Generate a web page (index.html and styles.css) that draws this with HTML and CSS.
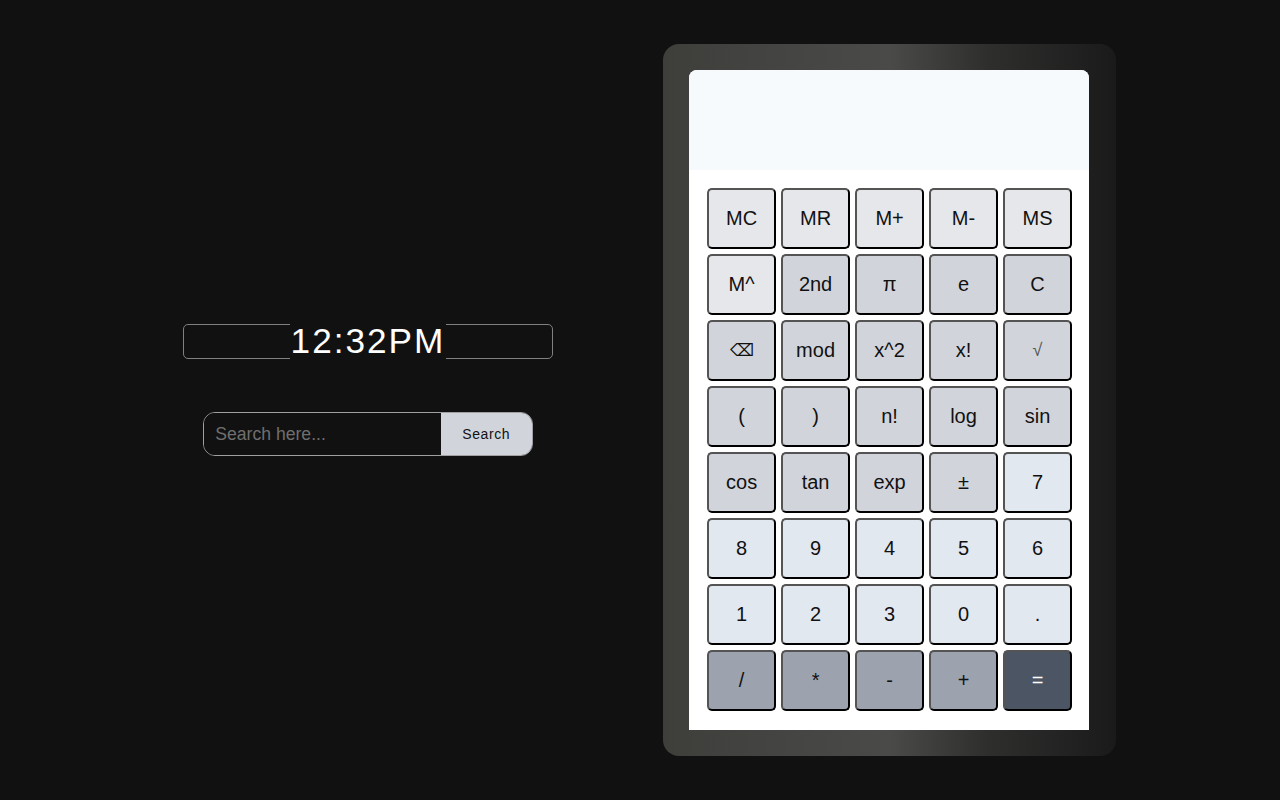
FILE: index.html
```html
<!DOCTYPE html>
<html lang="en">
<head>
<meta charset="utf-8">
<title>Calculator</title>
<link rel="stylesheet" href="styles.css">
</head>
<body>
<main class="page">
  <section class="left">
    <div class="clock"><span class="time">12:32PM</span></div>
    <form class="search">
      <input class="search-input" type="text" placeholder="Search here...">
      <button class="search-btn" type="button">Search</button>
    </form>
  </section>
  <section class="calc">
    <div class="screen">
      <div class="display"></div>
      <div class="keys">
        <button class="key mem">MC</button>
        <button class="key mem">MR</button>
        <button class="key mem">M+</button>
        <button class="key mem">M-</button>
        <button class="key mem">MS</button>
        <button class="key mem">M^</button>
        <button class="key fn">2nd</button>
        <button class="key fn">π</button>
        <button class="key fn">e</button>
        <button class="key fn">C</button>
        <button class="key fn back">⌫</button>
        <button class="key fn">mod</button>
        <button class="key fn">x^2</button>
        <button class="key fn">x!</button>
        <button class="key fn root">√</button>
        <button class="key fn">(</button>
        <button class="key fn">)</button>
        <button class="key fn">n!</button>
        <button class="key fn">log</button>
        <button class="key fn">sin</button>
        <button class="key fn">cos</button>
        <button class="key fn">tan</button>
        <button class="key fn">exp</button>
        <button class="key fn">±</button>
        <button class="key num">7</button>
        <button class="key num">8</button>
        <button class="key num">9</button>
        <button class="key num">4</button>
        <button class="key num">5</button>
        <button class="key num">6</button>
        <button class="key num">1</button>
        <button class="key num">2</button>
        <button class="key num">3</button>
        <button class="key num">0</button>
        <button class="key num">.</button>
        <button class="key op">/</button>
        <button class="key op">*</button>
        <button class="key op">-</button>
        <button class="key op">+</button>
        <button class="key eq">=</button>
      </div>
    </div>
  </section>
</main>
</body>
</html>
```
FILE: styles.css
```css
* { box-sizing: border-box; }
html, body { margin: 0; height: 100%; }
body {
  background: #111111;
  font-family: "Liberation Sans", Arial, sans-serif;
  overflow: hidden;
}
.page {
  display: flex;
  align-items: center;
  gap: 110.3px;
  height: 800px;
  padding-left: 183.3px;
}
.left {
  width: 369.4px;
  margin-bottom: 20px;
  display: flex;
  flex-direction: column;
  align-items: center;
  gap: 53px;
}
.clock {
  width: 100%;
  height: 35px;
  border: 1px solid #808080;
  border-radius: 5px;
  display: flex;
  justify-content: center;
}
.time {
  margin: -1px 0;
  padding: 0 0.6px;
  height: 35px;
  line-height: 33px;
  background: #111111;
  color: #ffffff;
  font-size: 35.2px;
  letter-spacing: 2px;
}
.search {
  width: 329.4px;
  height: 44px;
  display: flex;
  border: 1px solid #a0a0a0;
  border-radius: 12px;
  overflow: hidden;
}
.search-input {
  flex: 1;
  min-width: 0;
  border: 0;
  outline: 0;
  background: #111111;
  padding: 0 11px;
  color: #ffffff;
  font: 17.6px "Liberation Sans", Arial, sans-serif;
}
.search-input::placeholder { color: #6f6f6f; opacity: 1; }
.search-btn {
  width: 91px;
  border: 0;
  background: #d1d5db;
  color: #111111;
  font: 14px "Liberation Sans", Arial, sans-serif;
  letter-spacing: 0.6px;
  padding: 0;
}
.calc {
  width: 453px;
  height: 712px;
  padding: 26px 27px 26px 26px;
  border-radius: 16px;
  background: linear-gradient(to right, #3e3f3b 0%, #4a4b49 50%, #2e2f2d 72%, #1a1a1a 100%);
}
.screen {
  width: 400px;
  height: 660px;
  background: #ffffff;
  border-radius: 8px 8px 0 0;
  overflow: hidden;
}
.display {
  height: 100px;
  background: #f6fafd;
}
.keys {
  display: grid;
  grid-template-columns: repeat(5, 69.2px);
  grid-auto-rows: 61.2px;
  gap: 4.8px;
  padding: 18px 0 0 18px;
}
.key {
  border: 2px outset #000000;
  border-radius: 5px;
  color: #111111;
  padding: 0;
  font: 20px "Liberation Sans", Arial, sans-serif;
}
.back { font-size: 17px; }
.root { color: #555555; font-size: 18px; }
.mem { background: #e5e7eb; }
.fn { background: #d1d5db; }
.num { background: #e2e8f0; }
.op { background: #9ca3af; }
.eq { background: #4b5563; color: #ffffff; }
```
